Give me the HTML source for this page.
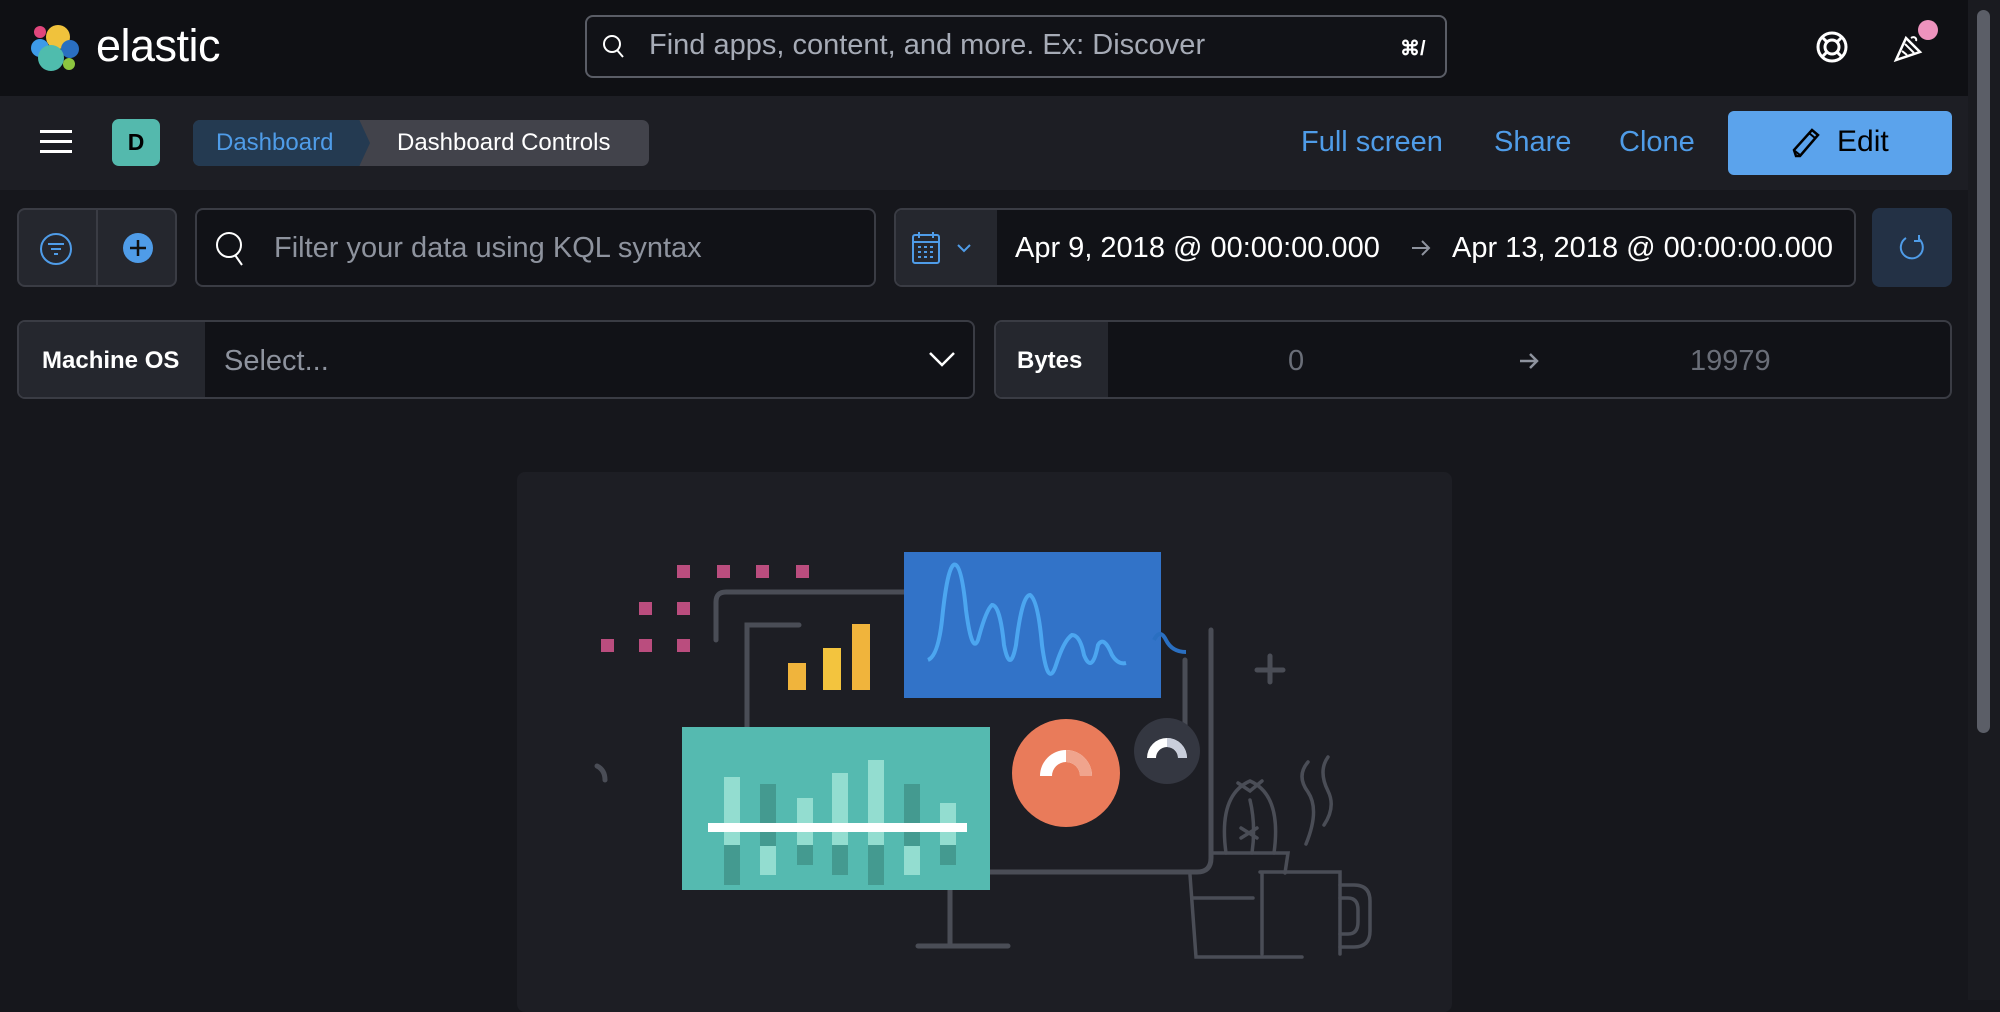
<!DOCTYPE html>
<html><head><meta charset="utf-8"><style>
*{box-sizing:border-box;margin:0;padding:0}
body{width:2000px;height:1000px;overflow:hidden;background:#16171c;font-family:"Liberation Sans",sans-serif;position:relative;color:#dfe5ef}
.a{position:absolute}
.top{left:0;top:0;width:1968px;height:96px;background:#0f1014}
.bar{left:0;top:96px;width:1968px;height:94px;background:#1d1e24}
.sb{left:1968px;top:0;width:32px;height:1000px;background:#1a1b20}
.thumb{left:1977px;top:10px;width:13px;height:723px;background:#5b5e67;border-radius:7px}
.box{border:2px solid #3a3c44;border-radius:8px;background:#111217}
.blue{color:#4f9ce8}
</style></head><body>
<div class="a top"></div>
<div class="a bar"></div>
<div class="a sb"></div><div class="a thumb"></div>

<svg class="a" style="left:30px;top:22px" width="50" height="52" viewBox="0 0 50 52">
<circle cx="28" cy="15" r="12" fill="#f0c23c"/>
<circle cx="10" cy="10" r="6" fill="#e0467c"/>
<circle cx="10" cy="26" r="9" fill="#3d9be9"/>
<circle cx="40" cy="27" r="9" fill="#2a6fc1"/>
<circle cx="21" cy="36" r="13" fill="#4fbcad"/>
<circle cx="39" cy="42" r="6" fill="#8cc63f"/>
</svg>
<div class="a" style="left:96px;top:20px;font-size:45px;color:#fff;letter-spacing:-0.5px">elastic</div>

<div class="a box" style="left:585px;top:15px;width:862px;height:63px;border-color:#5a5d66;background:#111217"></div>
<svg class="a" style="left:600px;top:33px" width="28" height="28" viewBox="0 0 28 28"><circle cx="12" cy="11" r="8" fill="none" stroke="#fff" stroke-width="2"/><path d="M17 17l6 7" stroke="#fff" stroke-width="2"/></svg>
<div class="a" style="left:649px;top:29px;font-size:29px;color:#a6abb6">Find apps, content, and more. Ex: Discover</div>
<div class="a" style="left:1400px;top:36px;font-size:20px;color:#fff;font-weight:bold">⌘/</div>

<svg class="a" style="left:1814px;top:29px" width="36" height="36" viewBox="0 0 36 36"><circle cx="18" cy="18" r="14" fill="none" stroke="#fff" stroke-width="3"/><circle cx="18" cy="18" r="7" fill="none" stroke="#fff" stroke-width="3"/><path d="M8 8l5 5M28 8l-5 5M8 28l5-5M28 28l-5-5" stroke="#fff" stroke-width="3"/></svg>
<svg class="a" style="left:1893px;top:30px" width="34" height="34" viewBox="0 0 34 34"><path d="M3 30L13 8l14 14z" fill="none" stroke="#fff" stroke-width="2.5"/><path d="M9 21l5 4M12 14l9 9" stroke="#fff" stroke-width="2"/><path d="M18 8c3-2 6 0 5 3" fill="none" stroke="#fff" stroke-width="2"/></svg>
<div class="a" style="left:1918px;top:20px;width:20px;height:20px;border-radius:50%;background:#ee93be"></div>

<div class="a" style="left:40px;top:130px;width:32px;height:3px;background:#fff;box-shadow:0 10px 0 #fff,0 20px 0 #fff"></div>
<div class="a" style="left:112px;top:119px;width:48px;height:47px;border-radius:7px;background:#54b9ad;color:#000;font-size:23px;text-align:center;line-height:47px;font-weight:bold">D</div>
<div class="a" style="left:193px;top:120px;width:456px;height:46px;border-radius:7px;background:#42434b"></div>
<div class="a" style="left:193px;top:120px;width:177px;height:46px;border-radius:7px 0 0 7px;background:#243a51;clip-path:polygon(0 0,94% 0,100% 50%,94% 100%,0 100%)"></div>
<div class="a blue" style="left:216px;top:129px;font-size:24px">Dashboard</div>
<div class="a" style="left:397px;top:129px;font-size:24px;color:#fff">Dashboard Controls</div>
<div class="a blue" style="left:1301px;top:126px;font-size:29px">Full screen</div>
<div class="a blue" style="left:1494px;top:126px;font-size:29px">Share</div>
<div class="a blue" style="left:1619px;top:126px;font-size:29px">Clone</div>
<div class="a" style="left:1728px;top:111px;width:224px;height:64px;border-radius:6px;background:#5ba3ec"></div>
<svg class="a" style="left:1790px;top:126px" width="32" height="34" viewBox="0 0 32 34"><path d="M6 30l-2-6L22 4l6 5L10 30z" fill="none" stroke="#000" stroke-width="2.5"/><path d="M19 7l6 5M5 25l5 4" stroke="#000" stroke-width="2"/></svg>
<div class="a" style="left:1837px;top:125px;font-size:30px;color:#000">Edit</div>

<div class="a box" style="left:17px;top:208px;width:160px;height:79px;background:#25272e"></div>
<div class="a" style="left:96px;top:210px;width:2px;height:75px;background:#3a3c44"></div>
<svg class="a" style="left:39px;top:232px" width="34" height="34" viewBox="0 0 34 34"><circle cx="17" cy="17" r="15" fill="none" stroke="#4f9ce8" stroke-width="2"/><path d="M9 12h16M12 17h10M15 22h4" stroke="#4f9ce8" stroke-width="2"/></svg>
<svg class="a" style="left:122px;top:232px" width="32" height="32" viewBox="0 0 32 32"><circle cx="16" cy="16" r="15" fill="#4f9ce8"/><path d="M16 8v16M8 16h16" stroke="#111" stroke-width="2.5"/></svg>
<div class="a box" style="left:195px;top:208px;width:681px;height:79px"></div>
<svg class="a" style="left:214px;top:230px" width="36" height="38" viewBox="0 0 36 38"><circle cx="15" cy="15" r="12" fill="none" stroke="#fff" stroke-width="2"/><path d="M21 25l7 10" stroke="#fff" stroke-width="2"/></svg>
<div class="a" style="left:274px;top:232px;font-size:29px;color:#8e939e">Filter your data using KQL syntax</div>
<div class="a box" style="left:894px;top:208px;width:962px;height:79px"></div>
<div class="a" style="left:896px;top:210px;width:101px;height:75px;background:#25272e;border-radius:6px 0 0 6px"></div>
<svg class="a" style="left:911px;top:231px" width="60" height="34" viewBox="0 0 60 34"><rect x="2" y="4" width="26" height="28" rx="2" fill="none" stroke="#4f9ce8" stroke-width="2"/><path d="M2 11h26M8 1v6M22 1v6" stroke="#4f9ce8" stroke-width="2"/><path d="M7 16h3M13 16h3M19 16h3M7 21h3M13 21h3M19 21h3M7 26h3M13 26h3M19 26h3" stroke="#4f9ce8" stroke-width="2"/><path d="M47 14l6 6 6-6" fill="none" stroke="#4f9ce8" stroke-width="2"/></svg>
<div class="a" style="left:1015px;top:232px;font-size:29px;color:#fff">Apr 9, 2018 @ 00:00:00.000</div>
<svg class="a" style="left:1410px;top:237px" width="22" height="22" viewBox="0 0 22 22"><path d="M2 11h17M12 4l7 7-7 7" fill="none" stroke="#8e939e" stroke-width="2"/></svg>
<div class="a" style="left:1452px;top:232px;font-size:29px;color:#fff">Apr 13, 2018 @ 00:00:00.000</div>
<div class="a" style="left:1872px;top:208px;width:80px;height:79px;border-radius:8px;background:#233145"></div>
<svg class="a" style="left:1897px;top:233px" width="30" height="30" viewBox="0 0 30 30"><path d="M22 6A11 11 0 1 1 9 5" fill="none" stroke="#4f9ce8" stroke-width="2"/><path d="M22 2v6h-5" fill="none" stroke="#4f9ce8" stroke-width="2"/></svg>

<div class="a box" style="left:17px;top:320px;width:958px;height:79px"></div>
<div class="a" style="left:19px;top:322px;width:186px;height:75px;background:#25272e;border-radius:6px 0 0 6px"></div>
<div class="a" style="left:42px;top:347px;font-size:24px;color:#fff;font-weight:bold">Machine OS</div>
<div class="a" style="left:224px;top:345px;font-size:29px;color:#8e939e">Select...</div>
<svg class="a" style="left:928px;top:350px" width="28" height="18" viewBox="0 0 28 18"><path d="M2 3l12 12L26 3" fill="none" stroke="#fff" stroke-width="2.5"/></svg>
<div class="a box" style="left:994px;top:320px;width:958px;height:79px"></div>
<div class="a" style="left:996px;top:322px;width:112px;height:75px;background:#25272e;border-radius:6px 0 0 6px"></div>
<div class="a" style="left:1017px;top:347px;font-size:24px;color:#fff;font-weight:bold">Bytes</div>
<div class="a" style="left:1288px;top:345px;font-size:29px;color:#6a6e78">0</div>
<svg class="a" style="left:1518px;top:350px" width="22" height="22" viewBox="0 0 22 22"><path d="M2 11h17M12 4l7 7-7 7" fill="none" stroke="#8e939e" stroke-width="2.5"/></svg>
<div class="a" style="left:1690px;top:345px;font-size:29px;color:#6a6e78">19979</div>

<div class="a" style="left:517px;top:472px;width:935px;height:540px;background:#1d1e24;border-radius:8px"></div>
<svg class="a" style="left:517px;top:472px" width="935" height="528" viewBox="517 472 935 528">
<g fill="#ba4d7e">
<rect x="677" y="565" width="13" height="13"/><rect x="717" y="565" width="13" height="13"/><rect x="756" y="565" width="13" height="13"/><rect x="796" y="565" width="13" height="13"/>
<rect x="639" y="602" width="13" height="13"/><rect x="677" y="602" width="13" height="13"/>
<rect x="601" y="639" width="13" height="13"/><rect x="639" y="639" width="13" height="13"/><rect x="677" y="639" width="13" height="13"/>
</g>
<g fill="none" stroke="#4a4d56" stroke-width="5" stroke-linecap="round">
<path d="M716 640V602q0-10 10-10h180"/>
<path d="M747 727V625h52"/>
<path d="M1211 630V858q0 14-14 14H990"/>
<path d="M950 890v56M918 946h90"/>
<path d="M597 766q8 4 8 14"/>
<path d="M1270 656v26M1257 670h26"/>
<path d="M1185 660v110"/>
</g>
<g fill="none" stroke="#4a4d56" stroke-width="3.5" stroke-linecap="round">
<path d="M1190 875l6 82h106M1193 898h60"/>
<path d="M1213 853h75l-3 20"/>
<path d="M1260 872h80v82M1262 872v82"/>
<path d="M1340 885h14q16 0 16 16v30q0 16-16 16h-14M1340 898h8q10 0 10 12v12q0 12-10 12h-8"/>
<path d="M1226 853q-8-58 24-72q32 14 24 72M1250 800q6 25 2 53M1241 828l16 10M1257 828l-16 10M1238 783l12 8 12-10"/>
<path d="M1308 762q-12 14 0 30q12 18-2 52M1328 757q-10 14 0 34q8 16-4 34"/>
</g>
<rect x="904" y="552" width="257" height="146" fill="#3273c8"/>
<path d="M928 660q10-4 14-40q6-60 14-55q6 4 10 45q6 45 12 30q8-30 14-35q8 0 12 40q6 30 12 0q6-50 14-50q8 5 12 50q6 45 14 20q8-25 16-30q8 0 12 20q8 20 14-10q6-10 14 10q6 10 14 8" fill="none" stroke="#4ca6f0" stroke-width="4"/>
<path d="M1154 640q6-12 12 0q6 12 20 12" fill="none" stroke="#2a6fc1" stroke-width="4"/>
<rect x="788" y="663" width="18" height="27" fill="#f0b43c"/>
<rect x="823" y="648" width="18" height="42" fill="#f3c43e"/>
<rect x="852" y="624" width="18" height="66" fill="#f0b43c"/>
<rect x="682" y="727" width="308" height="163" fill="#55bab0"/>
<g fill="#93ddd0"><rect x="724" y="777" width="16" height="70"/><rect x="760" y="845" width="16" height="30"/><rect x="797" y="798" width="16" height="50"/><rect x="832" y="773" width="16" height="75"/><rect x="868" y="760" width="16" height="88"/><rect x="904" y="845" width="16" height="30"/><rect x="940" y="803" width="16" height="45"/></g>
<g fill="#449a90"><rect x="760" y="784" width="16" height="62"/><rect x="797" y="845" width="16" height="20"/><rect x="724" y="845" width="16" height="40"/><rect x="832" y="845" width="16" height="30"/><rect x="868" y="845" width="16" height="40"/><rect x="904" y="784" width="16" height="62"/><rect x="940" y="845" width="16" height="20"/></g>
<rect x="708" y="823" width="259" height="9" fill="#fff"/>
<circle cx="1066" cy="773" r="54" fill="#e97b5a"/>
<path d="M1040 776a26 26 0 0 1 52 0h-12a14 14 0 0 0-28 0z" fill="#fff"/>
<path d="M1066 750a26 26 0 0 1 26 26h-12a14 14 0 0 0-14-14z" fill="#f0a48d"/>
<circle cx="1167" cy="751" r="33" fill="#343741"/>
<path d="M1147 758a20 20 0 0 1 40 0h-9a11 11 0 0 0-22 0z" fill="#fff"/>
<path d="M1167 738a20 20 0 0 1 20 20h-9a11 11 0 0 0-11-11z" fill="#c9cedb"/>
</svg>
</body></html>
